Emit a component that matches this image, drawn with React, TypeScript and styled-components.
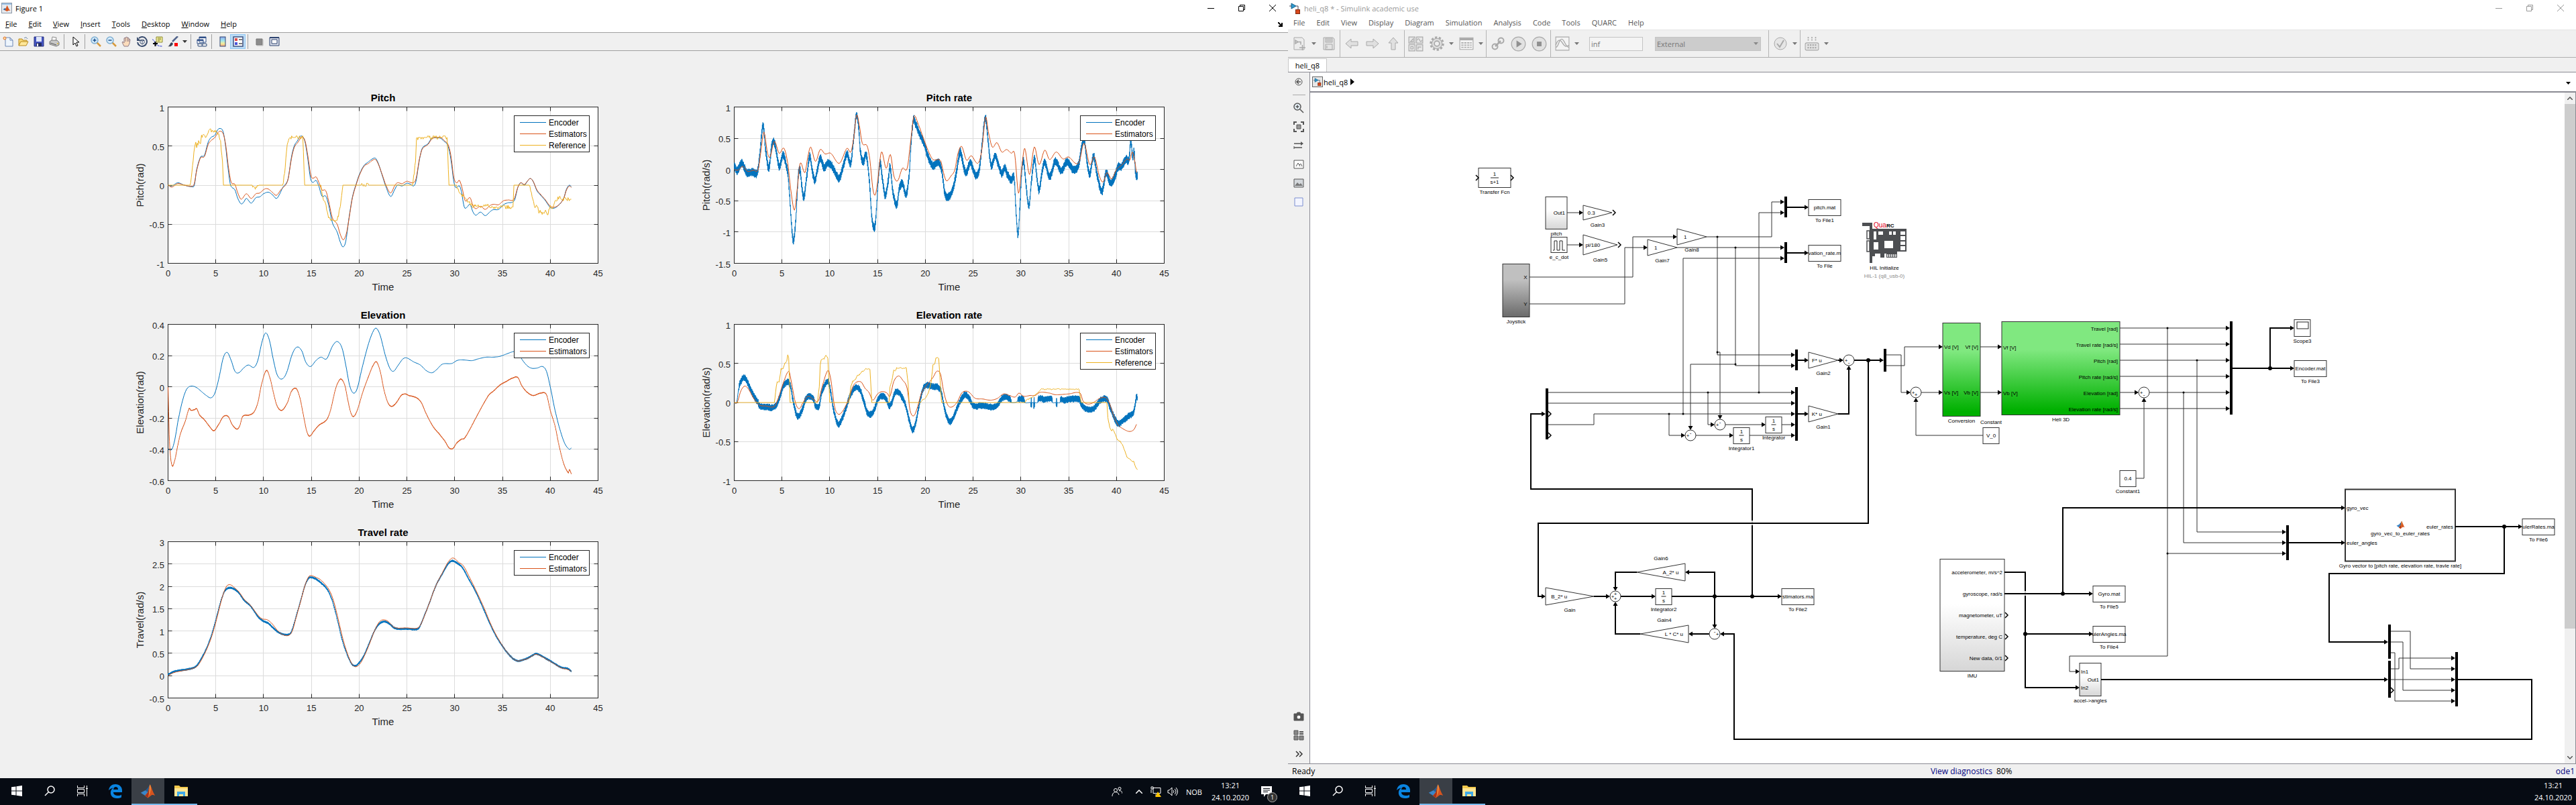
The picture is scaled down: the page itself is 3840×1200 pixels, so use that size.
import React from 'react';
import styled, { createGlobalStyle, css } from 'styled-components';

/* ------------------------------------------------------------------ */
/* Shared tokens                                                       */
/* ------------------------------------------------------------------ */

const UI_FONT = '"Open Sans", "Noto Sans", sans-serif';
const PLOT_FONT = '"Liberation Sans", Arial, sans-serif';
const BLUE = '#0072bd';
const ORANGE = '#d95319';
const YELLOW = '#edb120';

const GlobalStyle = createGlobalStyle`
  * { box-sizing: border-box; }
  body { margin: 0; background: #f0f0f0; font-family: ${UI_FONT}; font-size: 11px; color: #000; }
  button, input, select { font: inherit; color: inherit; }
`;

const Desktop = styled.div`
  display: grid;
  grid-template-columns: 1fr 1fr;
  min-height: 100vh;
`;

const Screen = styled.div`
  display: flex;
  flex-direction: column;
  min-width: 0;
`;

/* ------------------------------------------------------------------ */
/* Window chrome                                                       */
/* ------------------------------------------------------------------ */

const Window = styled.section`
  flex: 1;
  display: flex;
  flex-direction: column;
  min-height: 0;
  background: #f0f0f0;
`;

const TitleBar = styled.header<{ $dim?: boolean }>`
  display: flex;
  align-items: center;
  height: 24px;
  padding-left: 2px;
  background: #fff;
  color: ${(p) => (p.$dim ? '#999' : '#000')};
`;

const WindowTitle = styled.h1`
  flex: 1;
  margin: 0;
  padding-left: 5px;
  font-size: 11px;
  font-weight: 400;
`;

const CaptionButton = styled.button`
  width: 46px;
  height: 24px;
  padding: 0;
  border: 0;
  background: none;
  display: grid;
  place-items: center;
`;

const MenuBar = styled.nav<{ $compact?: boolean }>`
  display: flex;
  align-items: center;
  gap: 17px;
  height: ${(p) => (p.$compact ? 20 : 24)}px;
  padding: 0 8px;
  background: #fff;
  color: ${(p) => (p.$compact ? '#555' : '#000')};
`;

const MenuItem = styled.button`
  padding: 0;
  border: 0;
  background: none;
  line-height: 16px;
`;

const MenuEnd = styled.span`
  margin-left: auto;
  display: flex;
`;

const Caption = () => (
  <>
    <CaptionButton aria-label="Minimize">
      <svg width="10" height="10"><path d="M0 5.5h10" stroke="currentColor" /></svg>
    </CaptionButton>
    <CaptionButton aria-label="Restore">
      <svg width="10" height="10" fill="none" stroke="currentColor">
        <path d="M0.5 2.5h7v7h-7zM2.5 2.5v-2h7v7h-2" />
      </svg>
    </CaptionButton>
    <CaptionButton aria-label="Close">
      <svg width="10" height="10"><path d="M0 0l10 10M10 0L0 10" stroke="currentColor" /></svg>
    </CaptionButton>
  </>
);

/* ------------------------------------------------------------------ */
/* Logos                                                               */
/* ------------------------------------------------------------------ */

const Membrane = ({ size = 16 }: { size?: number }) => (
  <svg width={size} height={size} viewBox="0 0 16 16">
    <path d="M0.5 9.5L5.5 7 8 9 5 12.5z" fill="#3a86c8" />
    <path d="M5.500 7Q8.500 4.500 10 1L8 9z" fill="#245f96" />
    <path d="M10 1C11 1 12.500 8 15.500 12.500 13 11.500 12 11.500 10.500 13L8 15 5 12.500 8 9z" fill="#d6541f" />
    <path d="M10 1C11 1 11.500 6 10 10L8 15 5 12.500 8 9z" fill="#f0913f" />
    <path d="M10 1C9 5 10 9 8 15L5 12.500 8 9z" fill="#a8321a" />
  </svg>
);

const FigureIcon = () => (
  <svg width="16" height="16" viewBox="0 0 16 16">
    <rect x="0.500" y="0.500" width="15" height="15" fill="#e6e9ee" stroke="#8d99a8" />
    <path d="M1 2h14" stroke="#9cc3e8" strokeWidth="2" />
    <path d="M2.500 10l3-2 2 1.500-2 2z" fill="#2d6da8" />
    <path d="M5.500 11.500L8.500 4c1 1 2 5 5 8-2-.5-3-.5-5 1z" fill="#d6541f" />
  </svg>
);

const ModelIcon = () => (
  <svg width="17" height="17" viewBox="0 0 17 17">
    <path d="M3 1v8l7-4z" fill="#2f9bd0" stroke="#14608a" />
    <path d="M0 5h3M10 5h3v6" stroke="#445" fill="none" />
    <rect x="9.500" y="10.500" width="6" height="6" fill="#d9481c" stroke="#7e2a10" />
  </svg>
);

/* ------------------------------------------------------------------ */
/* Figure toolbar                                                      */
/* ------------------------------------------------------------------ */

const FigureTools = styled.div`
  display: flex;
  align-items: center;
  height: 28px;
  border-top: 1px solid #a0a0a0;
  border-bottom: 1px solid #a0a0a0;
`;

const FigureGroup = styled.div`
  display: flex;
  align-items: center;
  height: 22px;
  padding: 0 3px 0 4px;
  border-right: 1px solid #a0a0a0;
  &:first-child { padding-left: 0; }
  &:last-child { border-right: 0; }
`;

const FigureButton = styled.button<{ $on?: boolean; $narrow?: boolean }>`
  width: ${(p) => (p.$narrow ? 12 : 23)}px;
  height: 22px;
  padding: 0;
  border: 1px solid ${(p) => (p.$on ? '#90c8f6' : 'transparent')};
  background: ${(p) => (p.$on ? '#bcdcf4' : 'none')};
  display: grid;
  place-items: center;
`;

const Ic = ({ children, size = 16 }: { children: React.ReactNode; size?: number }) => (
  <svg width={size} height={size} viewBox="0 0 16 16" fill="none">{children}</svg>
);

const lens = (
  <>
    <path d="M9 9l6 6" stroke="#d79a3c" strokeWidth="2.500" />
    <circle cx="6" cy="6" r="5" fill="#d6ecfb" stroke="#7eaed2" strokeWidth="1.500" />
  </>
);

const figureIcons: Record<string, React.ReactNode> = {
  'New figure': <Ic><path d="M4 2h7l4 4v9H4z" fill="#edf5fd" stroke="#6c87b5" /><path d="M11 2v4h4" stroke="#6c87b5" /><circle cx="3" cy="3" r="2" fill="#ffe9a0" stroke="#e06a30" /></Ic>,
  'Open file': <Ic><path d="M1 14V4h5l1 2h6v2" fill="#f7d774" stroke="#b88a1e" /><path d="M1 14l3-6h11l-3 6z" fill="#ffe89a" stroke="#b88a1e" /><path d="M9 3c2-2 4-1 5 1" stroke="#57789c" /></Ic>,
  'Save figure': <Ic><path d="M1 1h14v14H1z" fill="#4454c0" stroke="#2a3480" /><path d="M4 1h8v7H4z" fill="#dfe6fa" /><path d="M4 10h8v5H4z" fill="#252d60" /><path d="M5 11h2v4H5z" fill="#fff" /></Ic>,
  'Print figure': <Ic><path d="M5 1l6 1-1 6H4z" fill="#fff" stroke="#888" /><path d="M1 8l3-2h8l3 3v4l-4 2-10-3z" fill="#c8c8c8" stroke="#777" /><path d="M2 10l9 3" stroke="#555" /><circle cx="13" cy="11" r="1" fill="#d8b93a" /></Ic>,
  'Edit plot': <Ic><path d="M5 1v12l3-3 2 5 2-1-2-5h4z" fill="#fff" stroke="#000" /></Ic>,
  'Zoom in': <Ic>{lens}<path d="M3.500 6h5M6 3.500v5" stroke="#1c4f8c" strokeWidth="1.500" /></Ic>,
  'Zoom out': <Ic>{lens}<path d="M3.500 6h5" stroke="#1c4f8c" strokeWidth="1.500" /></Ic>,
  Pan: <Ic><path d="M4 15L1 9l1-1 2 2V3l1-1 1 1 1-2 2 1 1 0 1 1 0 1 1 0 1 1-1 6-2 4z" fill="#fbdcbc" stroke="#8f7b86" /><path d="M6 3v5M9 2v6M11 4v4" stroke="#8f7b86" /></Ic>,
  'Rotate 3D': <Ic><path d="M3 3a7 7 0 1 1-2 6" stroke="#3c4f70" strokeWidth="2" /><path d="M0 1v6h6z" fill="#3c4f70" /><path d="M5 6l3-1 3 1v4l-3 2-3-2zM5 6l3 1 3-1M8 7v5" fill="#fff" stroke="#3c4f70" /></Ic>,
  'Data cursor': <Ic><path d="M6 1h9v8H6z" fill="#f3ee9c" stroke="#8b8a35" /><path d="M8 3h5M8 5h5M8 7h3" stroke="#8b8a35" /><path d="M0 5c2 0 3 2 4 5s5 5 11 5" stroke="#2030d0" strokeDasharray="3 1" /><path d="M1 11h7M4.500 8v7" stroke="#000" strokeWidth="2" /></Ic>,
  Brush: <Ic><path d="M15 0L7 8" stroke="#54658c" strokeWidth="2.500" /><path d="M0 15c3 0 3-5 6-6l2 2c-1 4-5 5-8 4z" fill="#3c4458" /><path d="M10 10h5v5h-5z" fill="#f00" /></Ic>,
  'Link plot': <Ic><path d="M4 1h10v8H4zM1 5h9v6H1z" fill="#fff" stroke="#2f4f88" /><path d="M4 2h10M1 6h9" stroke="#2f4f88" strokeWidth="2" /><rect x="2" y="11" width="7" height="4" rx="2" stroke="#667b9c" strokeWidth="1.500" /><rect x="8" y="11" width="7" height="4" rx="2" stroke="#667b9c" strokeWidth="1.500" /></Ic>,
  'Insert colorbar': <Ic><defs><linearGradient id="cb" x2="0" y2="1"><stop offset="0" stopColor="#8fa8ee" /><stop offset=".4" stopColor="#9fe6ee" /><stop offset=".7" stopColor="#f4ef9a" /><stop offset="1" stopColor="#f0a080" /></linearGradient></defs><rect x="4" y="1" width="8" height="14" fill="url(#cb)" stroke="#2f4570" /></Ic>,
  'Insert legend': <Ic><rect x="1" y="1" width="14" height="14" fill="#fff" stroke="#3c5080" strokeWidth="1.500" /><path d="M3 3h4v4H3z" fill="#e04a4a" /><path d="M3 9h4v4H3z" fill="#4a55d8" /><path d="M9 5h5M9 11h5" stroke="#000" /></Ic>,
  'Hide plot tools': <Ic><path d="M4 4h9v9H4z" fill="#8c8c8c" stroke="#777" /><path d="M5 14h9V5" stroke="#b8b8b8" /></Ic>,
  'Show plot tools': <Ic><path d="M1 2h14v12H1z" fill="#d8dce8" stroke="#2f4570" /><path d="M1 2h14" stroke="#2f4570" strokeWidth="2" /><path d="M4 5h8v6H4z" fill="#fff" stroke="#2f4570" /></Ic>,
};

const figureGroups: string[][] = [
  ['New figure', 'Open file', 'Save figure', 'Print figure'],
  ['Edit plot'],
  ['Zoom in', 'Zoom out', 'Pan', 'Rotate 3D', 'Data cursor', 'Brush', 'Brush colors'],
  ['Link plot'],
  ['Insert colorbar', 'Insert legend'],
  ['Hide plot tools', 'Show plot tools'],
];

const Caret = ({ color = '#333' }: { color?: string }) => (
  <svg width="7" height="5"><path d="M0 0h7L3.500 4z" fill={color} /></svg>
);

/* ------------------------------------------------------------------ */
/* Plots                                                               */
/* ------------------------------------------------------------------ */

type Pt = number[];
const parse = (s: string): Pt[] => s.trim().split(/\s+/).map((p) => p.split(',').map(Number));

const rng = (seed: number) => () => {
  seed = (seed * 1664525 + 1013904223) % 4294967296;
  return seed / 4294967296;
};

/* Cubic resampling, so that sparse samples give a smooth curve. */
const smooth = (pts: Pt[], step: number): Pt[] => {
  const out: Pt[] = [];
  for (let i = 0; i < pts.length - 1; i += 1) {
    const a = pts[Math.max(i - 1, 0)];
    const b = pts[i];
    const c = pts[i + 1];
    const d = pts[Math.min(i + 2, pts.length - 1)];
    const span = c[0] - b[0];
    const mb = (c[1] - a[1]) / (c[0] - a[0]);
    const mc = (d[1] - b[1]) / (d[0] - b[0]);
    const n = Math.max(1, Math.round(span / step));
    for (let k = 0; k < n; k += 1) {
      const u = k / n;
      const u2 = u * u;
      const u3 = u2 * u;
      const y = (2 * u3 - 3 * u2 + 1) * b[1] + (u3 - 2 * u2 + u) * span * mb
        + (3 * u2 - 2 * u3) * c[1] + (u3 - u2) * span * mc;
      out.push([b[0] + u * span, y, b[2] ?? -1]);
    }
  }
  out.push(pts[pts.length - 1]);
  return out;
};

const noisy = (pts: Pt[], amp: number): Pt[] => {
  const r = rng(7);
  return smooth(pts, 0.03).map((p, i) => {
    const a = p[2] === undefined || p[2] < 0 ? amp : p[2];
    return [p[0], p[1] + (i % 2 ? 1 : -1) * a * (0.6 + 0.4 * r())];
  });
};

const jitter = (pts: Pt[], amp: number): Pt[] => {
  const r = rng(3);
  const out: Pt[] = [];
  for (let i = 0; i < pts.length - 1; i += 1) {
    const [b, c] = [pts[i], pts[i + 1]];
    const n = Math.max(1, Math.round((c[0] - b[0]) / 0.07));
    for (let k = 0; k < n; k += 1) {
      const y = b[1] + ((c[1] - b[1]) * k) / n;
      out.push([b[0] + ((c[0] - b[0]) * k) / n, y === 0 ? 0 : y + (Math.round(r() * 2) - 1) * amp]);
    }
  }
  out.push(pts[pts.length - 1]);
  return out;
};

interface Series { name: string; color: string; points: Pt[] }
interface PlotSpec { title: string; ylabel: string; min: number; max: number; step: number; series: Series[] }

const pitchEnc = parse(`0,0 .4,-.01 1,.03 1.7,0 2.5,-.02 2.75,0 3,.2 3.4,.36 3.8,.38 4.2,.55 4.5,.61 4.9,.64 5.2,.71 5.45,.725 5.75,.69 6,.52 6.25,.25 6.5,.02 6.7,-.03 7,-.06 7.3,-.17 7.65,-.24 7.9,-.22 8.2,-.17 8.7,-.23 9.2,-.16 9.6,-.15 10,-.11 10.5,-.09 10.9,-.12 11.35,-.17 11.7,-.11 12,-.03 12.4,.03 12.6,.1 12.9,.35 13.2,.5 13.5,.56 13.9,.63 14.3,.57 14.6,.36 14.9,.09 15.15,.035 15.5,.06 15.8,-.02 16.1,-.14 16.5,-.14 16.8,-.25 17.2,-.48 17.7,-.6 18,-.72 18.3,-.79 18.6,-.72 18.9,-.45 19.3,-.15 19.7,.02 20,.13 20.5,.25 21,.3 21.3,.33 21.7,.345 22,.28 22.4,.13 22.8,-.02 23.3,-.145 23.7,-.06 24,0 24.5,-.01 25,.025 25.4,.01 25.7,-.01 25.95,.05 26.3,.32 26.6,.47 27.2,.53 27.6,.6 28,.605 28.5,.6 28.9,.56 29.3,.5 29.6,.33 29.9,.05 30.1,-.03 30.5,-.01 30.7,-.08 31,-.28 31.3,-.28 31.6,-.245 31.9,-.34 32.2,-.385 32.7,-.345 33.2,-.39 33.7,-.34 34,-.315 34.6,-.31 35.1,-.25 35.6,-.225 36,-.22 36.3,-.18 36.6,-.03 36.9,.03 37.3,0 37.6,.05 37.9,.085 38.2,.05 38.6,-.07 39,-.13 39.5,-.2 40,-.285 40.5,-.29 41,-.24 41.4,-.17 41.7,-.05 42,0 42.2,-.02`);
const pitchEst = parse(`0,0 .4,-.025 1,.02 1.7,0 2.5,-.015 2.75,.02 3,.19 3.4,.35 3.8,.365 4.2,.52 4.5,.57 4.9,.61 5.2,.67 5.5,.69 5.8,.65 6.05,.5 6.3,.25 6.6,.04 7,.01 7.3,-.1 7.65,-.18 8.2,-.11 8.7,-.17 9.2,-.11 9.6,-.1 10.1,-.05 10.5,-.05 10.9,-.09 11.35,-.13 11.8,-.06 12.4,.02 12.6,.1 12.9,.33 13.2,.48 13.6,.55 14,.62 14.35,.56 14.65,.36 14.95,.12 15.2,.09 15.5,.105 15.8,.03 16.1,-.06 16.5,-.07 16.8,-.2 17.2,-.42 17.7,-.5 18,-.62 18.35,-.7 18.7,-.6 19,-.38 19.3,-.16 19.7,.01 20,.12 20.5,.24 21,.28 21.3,.31 21.7,.33 22,.27 22.4,.14 22.8,0 23.3,-.1 23.7,-.01 24,.03 24.5,.02 25,.05 25.6,.03 25.95,.08 26.3,.33 26.6,.46 27.2,.52 27.6,.59 28,.61 28.6,.605 28.9,.57 29.3,.52 29.6,.38 29.9,.1 30.2,.03 30.5,.06 30.8,-.05 31.1,-.2 31.6,-.16 31.9,-.26 32.2,-.3 32.7,-.27 33.2,-.31 33.7,-.26 34.1,-.245 34.6,-.25 35.1,-.2 35.6,-.19 36.2,-.18 36.6,-.03 36.9,.03 37.3,.01 37.6,.05 37.9,.085 38.2,.05 38.6,-.06 39,-.12 39.5,-.19 40,-.27 40.5,-.28 41,-.24 41.4,-.17 41.7,-.06 42,-.01 42.2,-.03`);
const pitchRef = parse(`0,0 2.3,0 2.5,.15 2.7,.4 2.8,.5 2.9,.55 3,.5 3.2,.55 3.4,.53 3.5,.62 3.7,.65 4,.62 4.2,.67 4.4,.7 5,.7 5.3,.64 5.5,.55 5.7,.3 5.8,0 8.8,0 9.2,-.04 9.5,0 12,0 12.2,.15 12.4,.45 12.6,.59 12.8,.61 14.1,.61 14.3,0 16,0 16.2,-.15 16.6,-.3 16.8,-.42 17,-.45 17.7,-.45 17.9,-.35 18.1,-.2 18.3,0 20.2,0 20.5,.01 21,0 25.6,0 25.7,.1 25.9,.3 26,.58 26.2,.61 29.2,.61 29.4,0 30.1,0 30.5,-.1 31,-.15 31.5,-.22 31.9,-.27 33,-.27 33.6,-.26 34,-.28 36.1,-.28 36.2,0 37.8,0 38.1,-.15 38.4,-.27 38.7,-.28 38.8,-.36 39,-.33 39.3,-.38 39.5,-.32 39.7,-.38 40,-.28 40.3,-.28 40.5,-.2 40.8,-.17 41,-.14 41.3,-.18 42.2,-.18`);
const prEnc = parse(`0,.05 .3,-.02 .8,.1 1.3,-.05 1.9,-.04 2.4,-.05 2.65,.2 3,.7 3.3,.3 3.6,.02 3.9,.35 4.1,.45 4.4,.3 4.7,.05 5.1,.23 5.4,.1 5.7,-.2 6,-.9 6.2,-1.14 6.45,-.8 6.7,-.1 6.9,-.02 7.1,-.3 7.3,-.44 7.6,-.1 7.9,.21 8.2,-.05 8.45,-.17 8.7,0 9,.18 9.4,.03 9.8,.1 10.2,.06 10.6,-.06 11,-.14 11.4,.05 11.8,.25 12.2,.1 12.5,.5 12.8,.87 13,.7 13.2,.3 13.5,.12 13.8,.24 14.1,-.1 14.4,-.75 14.7,-.93 14.9,-.6 15.1,-.1 15.3,.1 15.5,-.15 15.8,-.41 16.1,-.2 16.3,.04 16.6,-.35 17,-.56 17.3,-.3 17.6,-.22 18,-.4 18.3,-.1 18.5,.4 18.75,.8 19,.72 19.4,.57 19.9,.4 20.3,.2 20.8,.06 21.3,.12 21.7,0 22,-.35 22.3,-.44 22.8,-.35 23.2,-.1 23.5,.2 23.7,.28 24,.05 24.3,-.05 24.7,.12 25,0 25.4,-.1 25.7,.05 26,.5 26.3,.82 26.6,.4 26.9,.06 27.3,.22 27.6,.1 28,-.06 28.3,.02 28.6,-.08 29,-.17 29.3,-.15 29.5,-.7 29.7,-1.03 29.9,-.6 30.1,0 30.3,.12 30.6,-.35 30.85,-.58 31.1,-.2 31.4,.17 31.7,-.15 31.9,-.34 32.2,-.05 32.5,.12 33,-.12 33.6,.13 34.2,-.02 34.8,.12 35.5,0 36,.06 36.3,.3 36.6,.48 36.9,.15 37.2,-.08 37.6,.21 38,-.1 38.5,-.35 38.9,-.06 39.4,-.22 39.9,-.08 40.2,.05 40.5,.04 41,.17 41.3,.15 41.5,.45 41.7,.2 41.85,.28 42,-.06 42.2,-.1`);
const prEst = parse(`0,0 .4,-.01 .9,.05 1.4,-.03 2,-.01 2.5,0 2.8,.3 3.1,.6 3.5,.25 3.75,.2 4.2,.45 4.7,.26 5.2,.34 5.6,.1 5.9,-.3 6.3,-.65 6.6,-.3 6.9,.1 7.4,-.05 7.7,.2 8,.36 8.5,.13 9,.32 9.5,.25 10.1,.26 11,.1 11.8,.34 12.2,.28 12.5,.5 12.8,.87 13.1,.7 13.4,.42 13.9,.38 14.2,.15 14.5,-.3 14.75,-.41 15,-.2 15.4,.28 15.9,.02 16.35,.24 16.7,-.1 17.1,-.18 17.6,.02 18.1,.02 18.5,.5 18.8,.85 19.2,.75 19.8,.5 20.3,.3 20.8,.16 21.6,.14 21.9,-.05 22.2,-.18 22.7,-.1 23.1,0 23.4,.25 23.8,.37 24.3,.15 24.8,.22 25.5,.1 25.9,.3 26.3,.84 26.6,.6 27,.36 27.5,.43 28,.28 28.5,.32 29,.26 29.35,.25 29.75,-.38 30.1,.05 30.4,.34 30.9,-.08 31.4,.36 31.9,.08 32.5,.31 33,.16 33.7,.28 34.4,.17 35,.2 35.7,.1 36.1,.12 36.6,.42 37.2,.08 37.7,.2 38.2,-.1 38.6,-.2 39,-.05 39.5,-.15 40,0 40.6,.08 41.1,.17 41.4,.15 41.65,.28 41.9,.15 42.1,-.05`);
const elEnc = parse(`0,-.4 .4,-.4 .7,-.34 1.1,-.2 1.6,-.07 2,-.01 2.5,.005 3,-.005 3.5,-.03 4,-.055 4.5,-.07 4.9,-.04 5.3,.05 5.8,.19 6.2,.22 6.6,.17 7,.1 7.4,.09 7.9,.12 8.4,.14 9,.125 9.4,.17 9.8,.28 10.2,.345 10.6,.3 11,.18 11.4,.08 11.9,.05 12.4,.09 13,.21 13.5,.255 14,.23 14.4,.16 14.9,.13 15.5,.17 16,.19 16.6,.18 17.2,.26 17.7,.29 18.2,.25 18.6,.14 19,.01 19.4,-.04 19.8,-.01 20.3,.12 21,.28 21.5,.36 21.8,.375 22.2,.33 22.7,.21 23.2,.12 23.6,.1 24.1,.14 24.6,.18 25,.185 25.7,.16 26.4,.14 27,.105 27.6,.09 28.1,.11 28.7,.145 29.7,.15 30.3,.17 31,.172 31.8,.168 32.5,.18 33.3,.19 34,.19 34.7,.195 35.4,.21 36.1,.225 36.6,.225 37,.18 37.5,.14 38,.12 38.6,.12 39.2,.13 39.6,.1 40,0 40.5,-.15 41,-.27 41.5,-.36 42,-.4 42.2,-.39`);
const elEst = parse(`0,0 .15,-.35 .4,-.5 .7,-.47 1,-.38 1.3,-.3 1.8,-.22 2.2,-.14 2.4,-.15 2.8,-.145 3,-.14 3.3,-.18 3.8,-.21 4.3,-.25 4.8,-.28 5.3,-.24 5.8,-.19 6.3,-.19 6.7,-.24 7.2,-.27 7.5,-.25 7.8,-.19 8.5,-.18 9,-.16 9.4,-.1 9.8,.02 10.3,.105 10.7,.05 11,-.03 11.4,-.12 11.9,-.15 12.5,-.1 12.9,-.03 13.4,-.01 13.8,-.07 14.1,-.16 14.5,-.28 14.8,-.315 15.3,-.28 15.8,-.245 16.6,-.21 17,-.15 17.5,-.02 17.8,.03 18.1,.05 18.5,.01 18.8,-.08 19.1,-.16 19.4,-.19 19.8,-.15 20.4,-.03 21,.07 21.4,.13 21.8,.16 22.2,.1 22.6,-.02 23,-.1 23.4,-.125 23.9,-.1 24.4,-.055 24.8,-.045 25.2,-.055 26,-.07 26.5,-.1 27,-.17 27.7,-.25 28.5,-.31 29,-.35 29.4,-.39 29.8,-.395 30.2,-.36 30.7,-.335 31,-.33 31.6,-.27 32.2,-.2 33,-.11 33.6,-.05 34,-.03 34.7,.01 35.4,.035 36,.055 36.6,.06 37,.01 37.5,-.03 38.2,-.055 39,-.04 39.6,-.05 40,-.15 40.5,-.25 40.9,-.37 41.4,-.49 41.9,-.55 42,-.53 42.2,-.555`);
/* A third number is the sample's own noise amplitude. */
const erEnc = parse(`0,0,0 .25,0,0 .5,.2 .8,.29 1,.32 1.3,.28 1.7,.17 2.2,.05 2.5,0 2.6,-.04 3.5,-.06 4.3,-.05 4.7,.05 5.1,.2 5.6,.26 5.9,.2 6.2,0 6.5,-.15 6.7,-.18 7.1,-.1 7.4,.02 7.8,.08 8.3,.04 8.5,-.04 8.9,-.04 9.1,.1 9.5,.23 9.9,.25 10.2,.05 10.5,-.15 10.9,-.28 11.3,-.2 11.7,-.07 12.1,.08 12.7,.19 13.2,.15 13.6,0 13.9,-.12 14.3,-.15 14.7,-.08 15,.03 15.4,.08 15.9,.05 16.2,-.04 16.5,0 16.8,.12 17.1,.14 17.5,.08 17.9,-.02 18.3,-.22 18.7,-.35 19.1,-.2 19.4,0 19.8,.18 20.2,.22 20.9,.2 21.3,.2 21.7,.12 22,-.08 22.5,-.24 22.9,-.2 23.4,-.05 23.8,.05 24.2,.1 24.7,.03 25,-.04 26,-.04 27,-.06 27.5,-.04 28,.05 28.3,.07 28.9,.04 29,0,0 29.6,.01,0 29.7,.04 30.3,.04 30.4,0,0 31,0,0 31.05,0,.08 31.15,0,0 31.35,0,.08 31.45,0,0 31.75,0,0 31.8,.04 32.1,.05 32.4,.04 32.9,.05 33.25,.04 33.3,0,0 33.65,0,0 33.7,0,.07 33.8,0,0 34.1,0,0 34.15,.04 34.5,.03 35,.04 36.1,.04 36.4,-.04 37,-.09 37.6,-.08 38,-.02 38.3,.03 39,.04 39.3,-.05 39.8,-.2 40.2,-.27 40.6,-.24 41.2,-.18 41.8,-.12 42,0 42.1,.08 42.2,.05`);
const erEst = parse(`0,0 .3,0 .7,.15 1.1,.21 1.5,.17 2,.06 2.6,-.03 3.3,-.045 4.2,-.05 4.6,.05 5,.2 5.7,.4 6,.25 6.4,0 6.8,-.08 7.2,0 7.7,.08 8.3,.04 8.8,.02 9.2,.2 9.8,.41 10.1,.3 10.5,-.05 10.9,-.15 11.4,-.1 12,.05 12.4,.2 12.8,.26 13.3,.26 13.7,.18 14.1,.13 14.5,.03 15,.11 15.5,.14 16,.12 16.3,.08 16.7,.27 17.2,.34 17.6,.29 18.1,.18 18.4,-.1 18.8,-.17 19.2,-.05 19.6,.12 20.2,.23 20.8,.32 21.2,.4 21.6,.36 21.9,.15 22.3,-.02 22.7,-.06 23.3,0 23.8,.12 24.2,.145 24.6,.13 25.2,.055 26,.045 26.8,.03 27.5,.05 28.2,.11 28.8,.09 29.4,.07 29.8,.12 30.3,.08 31,.09 31.5,.09 32,.13 33,.12 33.6,.1 35,.11 36.2,.12 36.5,.02 37,-.02 37.6,0 38.2,.05 38.9,.06 39.3,-.02 39.7,-.17 40.2,-.29 40.6,-.33 41.3,-.37 41.8,-.35 42.1,-.28`);
const erRef = parse(`0,0 4.2,0 4.4,.2 4.5,.26 4.7,.26 4.9,.43 5.1,.43 5.3,.5 5.5,.53 5.6,.61 5.7,.57 5.85,0 8.7,0 8.9,.2 9,.48 9.1,.54 9.4,.56 9.6,.61 9.8,.57 10,0 12,0 12.2,.2 12.4,.27 12.7,.3 12.9,.35 13.1,.35 13.3,.39 13.6,.41 13.7,.43 14.2,.43 14.4,0 16.2,0 16.3,.2 16.5,.28 16.7,.41 16.9,.41 17,.44 18,.44 18.2,.25 18.3,0 19.5,0 19.7,.03 20,.05 20.3,.12 20.6,.25 20.8,.48 21,.5 21.1,.57 21.4,.57 21.7,0 30.4,0 30.6,.03 31.1,.06 31.5,.1 31.9,.14 32.1,.17 36.1,.17 36.3,0 39,0 39.1,-.2 39.3,-.32 39.5,-.37 39.6,-.34 39.8,-.38 40.1,-.48 40.4,-.5 40.7,-.56 40.9,-.62 41.1,-.7 41.4,-.72 41.6,-.75 41.8,-.75 42,-.83 42.2,-.86`);
const trEnc = parse(`0,.02 .5,.08 1,.11 2,.14 2.8,.19 3.2,.28 4,.6 4.5,.88 5,1.25 5.5,1.65 5.9,1.88 6.3,1.96 6.8,1.95 7.3,1.88 8,1.68 8.6,1.57 9.5,1.3 10,1.22 10.5,1.17 11,1.07 11.5,.98 12,.93 12.6,.92 12.9,.98 13.3,1.25 13.9,1.7 14.3,2 14.7,2.18 15,2.2 15.5,2.16 16,2.08 16.7,1.92 17.2,1.67 17.7,1.27 18.2,.82 18.7,.5 19.2,.27 19.6,.22 20,.29 20.5,.45 21,.7 21.6,1 22.1,1.16 22.6,1.21 23.1,1.17 23.8,1.06 25,1.05 26,1.04 26.3,1.08 26.7,1.28 27.3,1.6 28,2 28.8,2.32 29.3,2.5 29.7,2.57 30.1,2.54 30.8,2.42 31.5,2.15 32.2,1.88 33,1.5 34,1.02 35,.66 36,.4 36.6,.33 37.1,.35 37.6,.39 38.1,.45 38.5,.49 39,.45 39.5,.39 40,.33 40.6,.25 41.2,.18 41.8,.16 42.2,.1`);
const trEst = parse(`0,0 .5,.06 1,.09 2,.13 2.8,.18 3.2,.25 4,.57 4.6,.9 5.1,1.28 5.6,1.7 5.9,1.9 6.2,2.02 6.6,2.03 7,1.96 7.4,1.88 8,1.7 8.6,1.58 9.5,1.33 9.9,1.27 10.4,1.25 10.9,1.16 11.5,1 12,.92 12.6,.9 13,1 13.4,1.3 13.9,1.68 14.3,2 14.7,2.21 15,2.24 15.5,2.2 16,2.14 16.8,1.94 17.3,1.69 17.8,1.27 18.3,.82 18.8,.48 19.2,.28 19.6,.2 20.1,.27 20.6,.47 21,.67 21.6,1 22.1,1.2 22.5,1.25 23,1.22 23.7,1.08 25,1.07 26,1.06 26.4,1.13 26.8,1.32 27.3,1.6 28,2 28.8,2.34 29.3,2.54 29.7,2.63 30,2.62 30.4,2.54 30.9,2.46 31.6,2.18 32.2,1.92 33,1.55 34,1.05 35,.67 36,.4 36.6,.33 37.1,.35 37.6,.38 38.1,.44 38.5,.48 39,.44 39.5,.38 40,.32 40.6,.24 41.2,.17 41.8,.14 42.2,.1`);

const plots: PlotSpec[] = [
  {
    title: 'Pitch', ylabel: 'Pitch(rad)', min: -1, max: 1, step: 0.5,
    series: [
      { name: 'Encoder', color: BLUE, points: smooth(pitchEnc, 0.08) },
      { name: 'Estimators', color: ORANGE, points: smooth(pitchEst, 0.08) },
      { name: 'Reference', color: YELLOW, points: jitter(pitchRef, 0.02) },
    ],
  },
  {
    title: 'Pitch rate', ylabel: 'Pitch(rad/s)', min: -1.5, max: 1, step: 0.5,
    series: [
      { name: 'Encoder', color: BLUE, points: noisy(prEnc, 0.07) },
      { name: 'Estimators', color: ORANGE, points: smooth(prEst, 0.08) },
    ],
  },
  {
    title: 'Elevation', ylabel: 'Elevation(rad)', min: -0.6, max: 0.4, step: 0.2,
    series: [
      { name: 'Encoder', color: BLUE, points: smooth(elEnc, 0.08) },
      { name: 'Estimators', color: ORANGE, points: noisy(elEst, 0.003) },
    ],
  },
  {
    title: 'Elevation rate', ylabel: 'Elevation(rad/s)', min: -1, max: 1, step: 0.5,
    series: [
      { name: 'Encoder', color: BLUE, points: noisy(erEnc, 0.045) },
      { name: 'Estimators', color: ORANGE, points: smooth(erEst, 0.08) },
      { name: 'Reference', color: YELLOW, points: jitter(erRef, 0.006) },
    ],
  },
  {
    title: 'Travel rate', ylabel: 'Travel(rad/s)', min: -0.5, max: 3, step: 0.5,
    series: [
      { name: 'Encoder', color: BLUE, points: noisy(trEnc, 0.025) },
      { name: 'Estimators', color: ORANGE, points: smooth(trEst, 0.08) },
    ],
  },
];

const FigureArea = styled.main`
  flex: 1;
  display: grid;
  grid-template-columns: 1fr 1fr;
  column-gap: 104px;
  align-content: start;
  padding: 45px 156px 0 180px;
`;

const PlotSvg = styled.svg`
  display: block;
  width: 100%;
  font-family: ${PLOT_FONT};
  font-size: 13px;
  fill: #262626;
  .title { font-size: 15px; font-weight: 700; fill: #000; text-anchor: middle; }
  .axis { font-size: 15px; text-anchor: middle; }
  .tick { text-anchor: middle; }
  .value { text-anchor: end; }
  .legend { font-size: 12px; fill: #000; }
`;

const AX = { x: 70.5, y: 38.5, w: 641, h: 233 };

const Plot = ({ spec }: { spec: PlotSpec }) => {
  const sx = (t: number) => AX.x + (t / 45) * AX.w;
  const sy = (v: number) => AX.y + ((spec.max - v) / (spec.max - spec.min)) * AX.h;
  const xs = Array.from({ length: 10 }, (_, i) => i * 5);
  const ys: number[] = [];
  for (let v = spec.min; v <= spec.max + 0.001; v += spec.step) ys.push(Math.round(v * 10) / 10);
  const right = AX.x + AX.w;
  const bottom = AX.y + AX.h;
  const lh = spec.series.length === 3 ? 54 : 37;
  const snap = (n: number) => Math.floor(n) + 0.5;
  return (
    <PlotSvg viewBox="0 0 740 324" role="img" aria-label={spec.title}>
      <rect x={AX.x} y={AX.y} width={AX.w} height={AX.h} fill="#fff" />
      {xs.slice(1, -1).map((t) => (
        <path key={t} d={`M${snap(sx(t))} ${AX.y}V${bottom}`} stroke="#dcdcdc" />
      ))}
      {ys.slice(1, -1).map((v) => (
        <path key={v} d={`M${AX.x} ${snap(sy(v))}H${right}`} stroke="#dcdcdc" />
      ))}
      {xs.map((t) => (
        <path key={t} d={`M${snap(sx(t))} ${AX.y}v6m0 ${AX.h - 12}v6`} stroke="#262626" />
      ))}
      {ys.map((v) => (
        <path key={v} d={`M${AX.x} ${snap(sy(v))}h6m${AX.w - 12} 0h6`} stroke="#262626" />
      ))}
      <rect x={AX.x} y={AX.y} width={AX.w} height={AX.h} fill="none" stroke="#262626" />
      {spec.series.map((s) => (
        <polyline
          key={s.name}
          points={s.points.map((p) => `${sx(p[0]).toFixed(1)},${sy(p[1]).toFixed(1)}`).join(' ')}
          fill="none"
          stroke={s.color}
          strokeLinejoin="round"
        />
      ))}
      <text className="title" x={AX.x + AX.w / 2} y="30">{spec.title}</text>
      {xs.map((t) => <text key={t} className="tick" x={sx(t)} y="291">{t}</text>)}
      {ys.map((v) => <text key={v} className="value" x="65" y={sy(v) + 6}>{v}</text>)}
      <text className="axis" x={AX.x + AX.w / 2} y="312">Time</text>
      <text className="axis" transform={`translate(34 ${AX.y + AX.h / 2}) rotate(-90)`}>{spec.ylabel}</text>
      <rect x="586.5" y="51.5" width="112" height={lh} fill="#fff" stroke="#262626" />
      {spec.series.map((s, i) => (
        <g key={s.name}>
          <path d={`M595 ${61.5 + i * 17}h39`} stroke={s.color} />
          <text className="legend" x="638" y={66 + i * 17}>{s.name}</text>
        </g>
      ))}
    </PlotSvg>
  );
};

const FigureWindow = () => (
  <Window>
    <TitleBar>
      <FigureIcon />
      <WindowTitle>Figure 1</WindowTitle>
      <Caption />
    </TitleBar>
    <MenuBar>
      {['File', 'Edit', 'View', 'Insert', 'Tools', 'Desktop', 'Window', 'Help'].map((m) => (
        <MenuItem key={m}><u>{m[0]}</u>{m.slice(1)}</MenuItem>
      ))}
      <MenuEnd>
        <svg width="7" height="7"><path d="M0 0l5 5M6 1v5H1" stroke="#000" fill="none" strokeWidth="2" /></svg>
      </MenuEnd>
    </MenuBar>
    <FigureTools>
      {figureGroups.map((g) => (
        <FigureGroup key={g[0]}>
          {g.map((name) => (
            <FigureButton key={name} aria-label={name} $on={name === 'Insert legend'} $narrow={!figureIcons[name]}>
              {figureIcons[name] ?? <Caret />}
            </FigureButton>
          ))}
        </FigureGroup>
      ))}
    </FigureTools>
    <FigureArea>
      {plots.map((p) => <Plot key={p.title} spec={p} />)}
    </FigureArea>
  </Window>
);

/* ------------------------------------------------------------------ */
/* Simulink toolbar                                                    */
/* ------------------------------------------------------------------ */

const ModelTools = styled.div`
  display: flex;
  height: 42px;
  border-top: 1px solid #e4e4e4;
  border-bottom: 1px solid #b0b0b0;
`;

const ModelGroup = styled.div`
  display: flex;
  align-items: center;
  padding: 0 1px;
  border-right: 1px solid #b4b4b4;
  &:last-child { border-right: 0; }
`;

const ModelButton = styled.button<{ $narrow?: boolean }>`
  width: ${(p) => (p.$narrow ? 13 : 31)}px;
  height: 31px;
  padding: 0;
  border: 0;
  background: none;
  display: grid;
  place-items: center;
`;

const field = css`
  height: 21px;
  border: 1px solid #c4c4c4;
  color: #777;
  padding: 0 2px;
  border-radius: 0;
`;

const StopTime = styled.input`
  ${field}
  width: 80px;
  margin-left: 12px;
  background: #f4f4f4;
`;

const SimMode = styled.select`
  ${field}
  width: 158px;
  margin: 0 10px 0 18px;
  background: #ccc;
  appearance: none;
`;

const SelectWrap = styled.label`
  position: relative;
  svg { position: absolute; right: 14px; top: 8px; }
`;

const G = ({ children, w = 20 }: { children: React.ReactNode; w?: number }) => (
  <svg width={w} height={w} viewBox="0 0 20 20" fill="none" stroke="#a9a9a9">{children}</svg>
);

const modelIcons: Record<string, React.ReactNode> = {
  'New model': <G><path d="M2 1h12l3 3v15H2z" fill="#ececec" /><path d="M4 5v5l4-2.500zM8 7.500h4v4M10 16h9M14.500 12v8" strokeWidth="1.500" /></G>,
  Save: <G><path d="M2 1h14l2 2v16H2z" fill="#e4e4e4" /><path d="M5 2h10v6H5zM5 11h10v8H5zM6 4h8M6 6h8M7 13v4" /></G>,
  Back: <G><path d="M1 10l8-7v4h10v6H9v4z" fill="#e0e0e0" /></G>,
  Forward: <G><path d="M19 10l-8-7v4H1v6h10v4z" fill="#e0e0e0" /></G>,
  Up: <G><path d="M10 1l7 8h-4v10H7V9H3z" fill="#e0e0e0" /></G>,
  'Library browser': <G w={23}><path d="M1 1h8v8H1zM11 1h8v8h-8zM1 11h8v8H1zM11 11h8v8h-8z" fill="#e8e8e8" /><path d="M3 7l4-4v4zM12 5q1.500-4 3 0t3 0M3.500 13.500h3v3h-3zM13 17v-3h4" /></G>,
  'Model configuration': <G w={22}><circle cx="10" cy="10" r="7" fill="#dedede" /><circle cx="10" cy="10" r="8.500" strokeDasharray="3 2.300" strokeWidth="2.500" /><circle cx="10" cy="10" r="3.500" fill="#f0f0f0" strokeWidth="1.500" /></G>,
  'Model explorer': <G w={22}><path d="M1 2h18v16H1z" fill="#f4f4f4" /><path d="M1 4h18" strokeWidth="3" /><path d="M3 9h14M3 12h14M3 15h14" strokeDasharray="3 1" strokeWidth="1.500" /></G>,
  Connect: <G><circle cx="5.500" cy="14.500" r="4" strokeWidth="2" /><circle cx="14.500" cy="5.500" r="4" strokeWidth="2" /><path d="M6 14l8-8" strokeWidth="2.500" /></G>,
  Run: <G w={23}><circle cx="10" cy="10" r="9" fill="#e2e2e2" /><path d="M7.500 5.500v9l7-4.500z" fill="#909090" stroke="none" /></G>,
  Stop: <G w={23}><circle cx="10" cy="10" r="9" fill="#e2e2e2" /><path d="M7 7h6v6H7z" fill="#909090" stroke="none" /></G>,
  'Data inspector': <G w={22}><path d="M1 1h18v18H1z" fill="#f4f4f4" /><path d="M1 15C5 15 5 4 9 4s5 11 10 11M1 12C4 4 7 4 10 9s5 6 9 3" strokeWidth="1.200" /></G>,
  'Model advisor': <G><circle cx="10" cy="10" r="9" fill="#e6e6e6" /><path d="M5 10l4 5 6-10" strokeWidth="2" /></G>,
  'Build model': <G w={22}><rect x="1" y="9" width="18" height="10" rx="2" fill="#e4e4e4" /><path d="M4 12h12M4 15.500h12" strokeDasharray="2 1.300" strokeWidth="2" /><path d="M5 1v6M10 1v6M15 1v6" strokeDasharray="2 1" strokeWidth="1.500" /></G>,
};

const Tool = ({ names }: { names: string[] }) => (
  <>
    {names.map((n) => (
      <ModelButton key={n} aria-label={n} $narrow={!modelIcons[n]}>
        {modelIcons[n] ?? <Caret color="#777" />}
      </ModelButton>
    ))}
  </>
);

const TabStrip = styled.div`
  display: flex;
  align-items: flex-end;
  height: 22px;
  border-bottom: 1px solid #8a8a92;
`;

const Tab = styled.button`
  width: 58px;
  height: 20px;
  padding: 0;
  border: 1px solid #c8c8c8;
  border-bottom: 0;
  background: #fff;
`;

const Workspace = styled.div`
  flex: 1;
  display: flex;
  min-height: 0;
`;

const Palette = styled.aside`
  width: 33px;
  display: flex;
  flex-direction: column;
  align-items: center;
  justify-content: space-between;
  border-right: 1px solid #8a8a92;
`;

const PaletteGroup = styled.div`
  display: flex;
  flex-direction: column;
  align-items: center;
`;

const PaletteButton = styled.button`
  width: 28px;
  height: 28px;
  padding: 0;
  border: 0;
  background: none;
  display: grid;
  place-items: center;
`;

const PaletteRule = styled.hr`
  width: 19px;
  margin: 5px 0;
  border: 0;
  border-top: 1px solid #aaa;
`;

const Editor = styled.div`
  flex: 1;
  display: flex;
  flex-direction: column;
  min-width: 0;
  background: #fff;
`;

const Breadcrumb = styled.div`
  display: flex;
  align-items: center;
  gap: 4px;
  height: 30px;
  padding: 0 8px 0 3px;
  border-bottom: 2px solid #8a8a92;
`;

const CrumbLink = styled.a`
  display: flex;
  align-items: center;
  gap: 1px;
  color: #000;
  text-decoration: none;
`;

const CrumbIcon = styled.span`
  display: grid;
  place-items: center;
  width: 16px;
  height: 16px;
  border: 1px solid #666;
  background: #e8e8e8;
  svg { width: 12px; height: 14px; }
`;

const CrumbMenu = styled.span`
  margin-left: auto;
`;

const CanvasRow = styled.div`
  flex: 1;
  display: flex;
  min-height: 0;
`;

const ScrollTrack = styled.div`
  width: 17px;
  display: flex;
  flex-direction: column;
  background: #f0f0f0;
  border-right: 1px solid #8a8a92;
`;

const ScrollArrow = styled.span`
  display: grid;
  place-items: center;
  height: 17px;
`;

const ScrollThumb = styled.div`
  flex: 81;
  background: #cdcdcd;
`;

const ScrollRest = styled.div`
  flex: 19;
`;

const StatusBar = styled.footer`
  display: grid;
  grid-template-columns: 1fr auto 1fr;
  grid-template-columns: 1fr 1fr auto;
  align-items: center;
  height: 22px;
  padding: 0 2px 0 6px;
  border-top: 1px solid #8a8a92;
  font-size: 12px;
`;

const StatusLink = styled.a`
  color: #00007f;
  text-decoration: none;
`;

const StatusCenter = styled.span`
  display: flex;
  gap: 6px;
  padding-left: 10px;
`;

const P = ({ children }: { children: React.ReactNode }) => (
  <svg width="16" height="16" viewBox="0 0 16 16" fill="none" stroke="#555">{children}</svg>
);

const paletteTop: [string, React.ReactNode][] = [
  ['Zoom', <P><circle cx="6" cy="6" r="5" fill="#eaf4fb" strokeWidth="1.500" /><path d="M10 10l5 5M3.500 6h5M6 3.500v5" strokeWidth="1.500" /></P>],
  ['Fit to view', <P><path d="M1 5V1h4M11 1h4v4M15 11v4h-4M5 15H1v-4" strokeWidth="2" /><path d="M5 5h6v6H5z" fill="#999" /></P>],
  ['Show signals', <P><path d="M1 5h12M1 11h12" strokeWidth="1.500" /><path d="M11 2l4 3-4 3z" fill="#555" stroke="none" /><path d="M1 9v4" /></P>],
  ['Annotation', <P><path d="M1 2h14v12H1z" fill="#fff" /><path d="M4 11l3-5 3 5M9 9l2-2 2 4" /></P>],
  ['Image', <P><path d="M1 2h14v12H1z" fill="#d4d8dc" /><path d="M2 12l4-5 3 3 2-2 3 4z" fill="#777" stroke="none" /></P>],
  ['Area', <P><path d="M2 2h12v12H2z" stroke="#7d8fd0" fill="#f3f5ff" /></P>],
];

const paletteBottom: [string, React.ReactNode][] = [
  ['Screenshot', <P><path d="M1 4h4l1-2h4l1 2h4v10H1z" fill="#555" /><circle cx="8" cy="9" r="3" fill="#fff" /></P>],
  ['Model data', <P><path d="M1 1h6v6H1zM1 9h6v6H1zM9 9h6v6H9z" fill="#888" /><path d="M9 3h6M9 6h6" strokeWidth="2" /></P>],
  ['Hide palette', <P><path d="M4 4l4 4-4 4M9 4l4 4-4 4" stroke="#333" strokeWidth="1.500" /></P>],
];

/* ------------------------------------------------------------------ */
/* Block diagram                                                       */
/* ------------------------------------------------------------------ */

const Diagram = styled.svg`
  flex: 1;
  min-width: 0;
  align-self: flex-start;
  font-family: ${PLOT_FONT};
  font-size: 8px;
  fill: #000;
  text { text-anchor: middle; }
  .left { text-anchor: start; }
  .right { text-anchor: end; }
`;

/* Draws a signal line; it ends in an arrow head. */
const Wire = ({ d, bold }: { d: string; bold?: boolean }) => {
  const pts = parse(d);
  const [a, b] = pts.slice(-2);
  const len = Math.hypot(b[0] - a[0], b[1] - a[1]);
  const [ux, uy] = [(b[0] - a[0]) / len, (b[1] - a[1]) / len];
  const base = [b[0] - ux * 6, b[1] - uy * 6];
  return (
    <>
      <polyline
        points={[...pts.slice(0, -1), base].map((p) => p.join()).join(' ')}
        fill="none"
        stroke={bold ? '#000' : '#333'}
        strokeWidth={bold ? 2 : 1}
      />
      <polygon
        fill="#000"
        points={`${b[0]},${b[1]} ${base[0] - uy * 3.5},${base[1] + ux * 3.5} ${base[0] + uy * 3.5},${base[1] - ux * 3.5}`}
      />
    </>
  );
};

/* A bold line that runs into a port without an arrow head. */
const Lead = ({ d }: { d: string }) => <polyline points={d} fill="none" stroke="#000" strokeWidth="2" />;

const Dot = ({ x, y, big }: { x: number; y: number; big?: boolean }) => <circle cx={x} cy={y} r={big ? 3 : 1.5} fill="#000" />;
const Bar = ({ x, y, h }: { x: number; y: number; h: number }) => <rect x={x} y={y} width="4" height={h} fill="#000" />;
const Bridge = ({ x, y }: { x: number; y: number }) => <rect x={x - 2} y={y - 4} width="4" height="7" fill="#fff" opacity="0.8" />;
const OpenPort = ({ x, y }: { x: number; y: number }) => <path d={`M${x} ${y - 4}l4 4l-4 4`} fill="none" stroke="#000" strokeWidth="1.5" />;

interface BoxProps {
  x: number; y: number; w: number; h?: number; text?: string; label?: string;
  fill?: string; above?: boolean; bold?: boolean; children?: React.ReactNode;
}
const Box = ({ x, y, w, h = 24, text, label, fill = '#fff', above, bold, children }: BoxProps) => (
  <g>
    <rect x={x} y={y + 0.5} width={w} height={h} fill={fill} stroke="#333" strokeWidth={bold ? 2 : 1} />
    {text && <text x={x + w / 2} y={y + h / 2 + 3}>{text}</text>}
    {children}
    {label && <text x={x + w / 2} y={above ? y - 5 : y + h + 10}>{label}</text>}
  </g>
);

const Fraction = ({ x, y, den, w = 7 }: { x: number; y: number; den: string; w?: number }) => (
  <>
    <text x={x} y={y - 3}>1</text>
    <path d={`M${x - w / 2} ${y}h${w}`} stroke="#222" />
    <text x={x} y={y + 9}>{den}</text>
  </>
);

interface GainProps {
  x: number; y: number; w: number; h: number; text: string; label: string; flip?: boolean; above?: boolean;
}
const Gain = ({ x, y, w, h, text, label, flip, above }: GainProps) => (
  <g>
    <path
      d={flip ? `M${x + w} ${y - h / 2}v${h}L${x} ${y}z` : `M${x} ${y - h / 2}v${h}L${x + w} ${y}z`}
      fill="#fff"
      stroke="#333"
    />
    <text x={flip ? x + w * 0.7 : x + w * 0.28} y={y + 3}>{text}</text>
    <text x={x + w / 2} y={above ? y - h / 2 - 5 : y + h / 2 + 10}>{label}</text>
  </g>
);

/* Each sign is placed on the side that its input arrives from. */
const Sum = ({ x, y, signs }: { x: number; y: number; signs: [string, 'l' | 'r' | 't' | 'b'][] }) => {
  const off = { l: [-4, 3], r: [4, 3], t: [0, -1], b: [0, 6] };
  return (
    <g>
      <circle cx={x} cy={y} r="8" fill="#fff" stroke="#333" />
      {signs.map(([s, side]) => (
        <text key={side} x={x + off[side][0]} y={y + off[side][1]}>{s}</text>
      ))}
    </g>
  );
};

const HilBoard = () => (
  <g>
    <path d="M2776 332h15v60h-4v-55h-11z" fill="#4d4f52" />
    <path d="M2783 344h4v12h-4zM2783 359h4v16h-4z" fill="#fff" stroke="#4d4f52" strokeWidth="1.500" />
    <path d="M2791 341h51v34h-14v9h-16v-6h-3v6h-6v-6h-8v4h-4z" fill="#4d4f52" />
    <path d="M2793 345h4v12h-4zM2793 361h7v11h-7zM2800 345h7v5h-7zM2816 345h4v5h-4zM2822 345h4v5h-4zM2833 345h7v5h-7zM2833 352h7v6h-7zM2833 360h7v5h-7zM2833 367h7v6h-7zM2809 359h13v11h-13z" fill="#fff" />
    <path d="M2814 379v4M2817 379v4M2820 379v4M2823 379v4M2826 379v4" stroke="#fff" strokeWidth="1.500" />
    <text className="left" x="2793" y="339" fontSize="10" fill="#e2001a">Qua</text>
    <text className="left" x="2812" y="339" fontWeight="700">RC</text>
  </g>
);

const ModelDiagram = () => (
  <Diagram viewBox="1953 138 1870 1000" role="img" aria-label="heli_q8 block diagram">
    <defs>
      <linearGradient id="gray" x2="0" y2="1"><stop offset=".4" stopColor="#fff" /><stop offset="1" stopColor="#d6d6d6" /></linearGradient>
      <linearGradient id="dark" x2="0" y2="1"><stop offset=".3" stopColor="#c0c0c0" /><stop offset="1" stopColor="#6a6a6a" /></linearGradient>
      <linearGradient id="green" x2="0" y2="1"><stop offset=".3" stopColor="#80e880" /><stop offset=".95" stopColor="#00b000" /></linearGradient>
    </defs>

    {/* Inputs and joystick */}
    <Box x={2204} y={250} w={48} h={29} label="Transfer Fcn"><Fraction x={2228} y={265} den="s+1" w={12} /></Box>
    <OpenPort x={2200} y={265} />
    <OpenPort x={2252} y={265} />
    <Box x={2304} y={293} w={32} h={48} fill="url(#gray)" label="pitch"><text className="right" x="2333" y="320">Out1</text></Box>
    <Wire d="2336,317 2360,317" />
    <Gain x={2360} y={317} w={43} h={22} text="0.3" label="Gain3" />
    <OpenPort x={2404} y={317} />
    <Box x={2312} y={353} w={24} h={23} label="e_c_dot">
      <path d="M2315 373h2v-14h4v14h4v-14h4v14h4" fill="none" stroke="#222" />
    </Box>
    <Wire d="2336,365 2360,365" />
    <Gain x={2360} y={365} w={51} h={30} text="pi/180" label="Gain5" />
    <OpenPort x={2412} y={365} />
    <Box x={2240} y={393} w={40} h={79} fill="url(#dark)" label="Joystick">
      <text x="2274" y="416">X</text>
      <text x="2274" y="456">Y</text>
    </Box>
    <Wire d="2280,413 2434,413 2434,353 2500,353" />
    <Wire d="2280,453 2422,453 2422,369 2456,369" />
    <Wire d="2544,353 2641,353 2641,301 2660,301" />
    <Wire d="2560,353 2560,529 2676,529" />
    <Wire d="2560,525 2564,525 2564,625" />
    <Wire d="2500,369 2660,369" />
    <Wire d="2587,369 2587,545 2676,545" />
    <Wire d="2587,543 2520,543 2520,641" />
    <Wire d="2509,617 2509,385 2660,385" />
    <Wire d="2622,585 2622,317 2660,317" />
    <Gain x={2500} y={353} w={44} h={24} text="1" label="Gain8" />
    <Gain x={2456} y={369} w={44} h={24} text="1" label="Gain7" />
    <Dot x={2560} y={353} /><Dot x={2587} y={369} /><Dot x={2560} y={525} /><Dot x={2587} y={543} />
    <Bar x={2660} y={293} h={31} />
    <Bar x={2660} y={361} h={31} />
    <Wire bold d="2664,309 2696,309" />
    <Wire bold d="2664,377 2696,377" />
    <Box x={2696} y={297} w={48} text="pitch.mat" label="To File1" />
    <Box x={2696} y={365} w={48} text="vation_rate.m" label="To File" />
    <HilBoard />
    <text x="2809" y="402">HIL Initialize</text>
    <text x="2809" y="414" fill="#888">HIL-1 (q8_usb-0)</text>

    {/* State feedback */}
    <Wire bold d="2612,889 2612,729 2282,729 2282,617 2304,617" />
    <Bar x={2304} y={579} h={76} />
    <Wire d="2308,585 2676,585" />
    <Wire d="2308,601 2676,601" />
    <Wire d="2308,633 2376,633 2376,617 2676,617" />
    <OpenPort x={2308} y={617} />
    <OpenPort x={2308} y={649} />
    <Wire d="2546,585 2546,633 2556,633" />
    <Wire d="2488,617 2488,649 2512,649" />
    <Dot x={2546} y={585} /><Dot x={2622} y={585} /><Dot x={2488} y={617} /><Dot x={2509} y={617} />
    <Sum x={2564} y={633} signs={[['+', 'l'], ['-', 't']]} />
    <Sum x={2520} y={649} signs={[['+', 'l'], ['-', 't']]} />
    <Wire d="2572,633 2632,633" />
    <Wire d="2528,649 2584,649" />
    <Wire d="2656,633 2676,633" />
    <Wire d="2608,649 2676,649" />
    <Box x={2632} y={621} w={24} label="Integrator"><Fraction x={2644} y={633} den="s" /></Box>
    <Box x={2584} y={637} w={24} label="Integrator1"><Fraction x={2596} y={649} den="s" /></Box>
    <Bar x={2676} y={521} h={31} />
    <Bar x={2676} y={577} h={80} />
    <Wire bold d="2680,537 2696,537" />
    <Wire bold d="2680,617 2696,617" />
    <Gain x={2696} y={537} w={44} h={24} text="F* u" label="Gain2" />
    <Gain x={2696} y={617} w={44} h={24} text="K* u" label="Gain1" />
    <Wire bold d="2740,537 2748,537" />
    <Wire bold d="2740,617 2756,617 2756,545" />
    <Sum x={2756} y={537} signs={[['+', 'l'], ['-', 'b']]} />
    <Wire bold d="2764,537 2808,537" />
    <Bar x={2808} y={520} h={34} />
    <Wire d="2812,529 2834,529 2834,585 2848,585" />
    <Wire d="2812,545 2839,545 2839,517 2896,517" />
    <Bridge x={2612} y={780} />
    <Wire bold d="2785,537 2785,780 2293,780 2293,889 2304,889" />
    <Dot big x={2785} y={537} />

    {/* Observer */}
    <Wire bold d="2376,889 2400,889" />
    <Gain x={2304} y={889} w={72} h={26} text="B_2* u" label="Gain" />
    <Wire bold d="2416,889 2468,889" />
    <Box x={2468} y={877} w={24} label="Integrator2"><Fraction x={2480} y={889} den="s" /></Box>
    <Wire bold d="2492,889 2656,889" />
    <Box x={2656} y={877} w={48} text="stimators.ma" label="To File2" />
    <Wire bold d="2556,889 2556,853 2512,853" />
    <Wire bold d="2440,853 2408,853 2408,881" />
    <Gain flip above x={2440} y={853} w={72} h={26} text="A_2* u" label="Gain6" />
    <Wire bold d="2556,889 2556,937" />
    <Wire bold d="2548,945 2517,945" />
    <Wire bold d="2445,945 2408,945 2408,897" />
    <Gain flip above x={2445} y={945} w={72} h={26} text="L * C* u" label="Gain4" />
    <Dot big x={2556} y={889} /><Dot big x={2612} y={889} />
    <Sum x={2408} y={889} signs={[['+', 'l'], ['+', 't'], ['+', 'b']]} />
    <Sum x={2556} y={945} signs={[['-', 't'], ['+', 'r']]} />
    <Wire bold d="3664,1013 3774,1013 3774,1102 2585,1102 2585,945 2564,945" />

    {/* Helicopter */}
    <Wire d="2956,649 2856,649 2856,593" />
    <Sum x={2856} y={585} signs={[['+', 'l'], ['+', 'b']]} />
    <Wire d="2864,585 2896,585" />
    <Box x={2896} y={481} w={56} h={139} fill="url(#green)" label="Conversion">
      <text className="left" x="2898" y="520">Vd [V]</text>
      <text className="left" x="2898" y="588">Vs [V]</text>
      <text className="right" x="2949" y="520">Vf [V]</text>
      <text className="right" x="2949" y="588">Vb [V]</text>
    </Box>
    <Wire d="2952,517 2984,517" />
    <Wire d="2952,585 2984,585" />
    <Box x={2984} y={479} w={176} h={139} fill="url(#green)" label="Heli 3D">
      <text className="left" x="2986" y="521">Vf [V]</text>
      <text className="left" x="2986" y="589">Vb [V]</text>
      {['Travel [rad]', 'Travel rate [rad/s]', 'Pitch [rad]', 'Pitch rate [rad/s]', 'Elevation [rad]', 'Elevation rate [rad/s]'].map((t, i) => (
        <text key={t} className="right" x="3157" y={493 + i * 24}>{t}</text>
      ))}
    </Box>
    <Box above x={2956} y={637} w={24} text="V_0" label="Constant" />
    {[489, 513, 537, 561, 609].map((y) => <Wire key={y} d={`3160,${y} 3324,${y}`} />)}
    <Wire d="3160,585 3188,585" />
    <Wire d="3204,585 3324,585" />
    <Wire d="3184,713 3196,713 3196,593" />
    <Sum x={3196} y={585} signs={[['+', 'l'], ['-', 'b']]} />
    <Box x={3160} y={701} w={24} text="0.4" label="Constant1" />
    <Bar x={3324} y={479} h={139} />
    <Wire bold d="3328,549 3420,549" />
    <Wire bold d="3384,549 3384,489 3420,489" />
    <Dot big x={3384} y={549} />
    <Box x={3420} y={476} w={24} h={25} label="Scope3">
      <rect x="3424" y="480" width="17" height="10" fill="none" stroke="#222" />
    </Box>
    <Box x={3420} y={537} w={48} text="Encoder.mat" label="To File3" />
    <Wire d="3231,489 3231,978 3085,978 3085,1001 3100,1001" />
    <Wire d="3275,537 3275,793 3408,793" />
    <Wire d="3255,585 3255,809 3408,809" />
    <Wire d="3231,825 3408,825" />
    <Dot x={3231} y={489} /><Dot x={3275} y={537} /><Dot x={3255} y={585} /><Dot x={3231} y={825} />
    <Bar x={3408} y={783} h={52} />
    <Wire bold d="3412,809 3496,809" />

    {/* IMU */}
    <Box x={2892} y={833} w={96} h={167} fill="url(#gray)" label="IMU">
      {['accelerometer, m/s^2', 'gyroscope, rad/s', 'magnetometer, uT', 'temperature, deg C', 'New data, 0/1'].map((t, i) => (
        <text key={t} className="right" x="2985" y={856 + i * 32}>{t}</text>
      ))}
    </Box>
    {[917, 949, 981].map((y) => <OpenPort key={y} x={2989} y={y} />)}
    <Wire bold d="2988,853 3019,853 3019,1025 3100,1025" />
    <Bridge x={3019} y={885} />
    <Wire bold d="2988,885 3120,885" />
    <Wire bold d="3075,885 3075,757 3496,757" />
    <Wire bold d="3019,945 3120,945" />
    <Dot big x={3075} y={885} /><Dot big x={3019} y={945} />
    <Box x={3120} y={873} w={48} text="Gyro.mat" label="To File5" />
    <Box x={3120} y={933} w={48} text="ulerAngles.ma" label="To File4" />
    <Box x={3100} y={988} w={32} h={49} fill="url(#gray)" label="accel->angles">
      <text className="left" x="3102" y="1004">In1</text>
      <text className="left" x="3102" y="1028">In2</text>
      <text className="right" x="3129" y="1016">Out1</text>
    </Box>
    <Wire bold d="3132,1013 3560,1013" />

    {/* Euler rates */}
    <Box bold x={3496} y={729} w={164} h={107} label="Gyro vector to [pitch rate, elevation rate, travle rate]">
      <text className="left" x="3498" y="760">gyro_vec</text>
      <text className="left" x="3498" y="812">euler_angles</text>
      <text className="right" x="3657" y="788">euler_rates</text>
      <text x="3578" y="798">gyro_vec_to_euler_rates</text>
      <g transform="translate(3572 776)"><Membrane size={13} /></g>
    </Box>
    <Lead d="3660,785 3735,785" />
    <Wire bold d="3733,785 3760,785" />
    <Wire bold d="3733,785 3733,855 3472,855 3472,957 3560,957" />
    <Dot big x={3733} y={785} />
    <Box x={3760} y={773} w={48} text="ulerRates.ma" label="To File6" />
    <Bar x={3560} y={931} h={51} />
    <Bar x={3560} y={985} h={55} />
    <Wire d="3564,941 3593,941 3593,997 3660,997" />
    <Wire d="3564,957 3582,957 3582,1029 3660,1029" />
    <Wire d="3564,973 3570,973 3570,1045 3660,1045" />
    <Wire d="3564,997 3576,997 3576,981 3660,981" />
    <Wire d="3564,1013 3660,1013" />
    <OpenPort x={3564} y={1029} />
    <Bar x={3660} y={972} h={81} />
  </Diagram>
);

const ModelWindow = () => (
  <Window>
    <TitleBar $dim>
      <ModelIcon />
      <WindowTitle>heli_q8 * - Simulink academic use</WindowTitle>
      <Caption />
    </TitleBar>
    <MenuBar $compact>
      {['File', 'Edit', 'View', 'Display', 'Diagram', 'Simulation', 'Analysis', 'Code', 'Tools', 'QUARC', 'Help'].map((m) => (
        <MenuItem key={m}>{m}</MenuItem>
      ))}
    </MenuBar>
    <ModelTools>
      <ModelGroup><Tool names={['New model', 'New options', 'Save']} /></ModelGroup>
      <ModelGroup><Tool names={['Back', 'Forward', 'Up']} /></ModelGroup>
      <ModelGroup><Tool names={['Library browser', 'Model configuration', 'Configuration options', 'Model explorer', 'Explorer options']} /></ModelGroup>
      <ModelGroup><Tool names={['Connect', 'Run', 'Stop']} /></ModelGroup>
      <ModelGroup>
        <Tool names={['Data inspector', 'Inspector options']} />
        <StopTime aria-label="Stop time" defaultValue="inf" />
        <SelectWrap>
          <SimMode aria-label="Simulation mode" defaultValue="External">
            <option>External</option>
          </SimMode>
          <Caret color="#888" />
        </SelectWrap>
      </ModelGroup>
      <ModelGroup><Tool names={['Model advisor', 'Advisor options']} /></ModelGroup>
      <ModelGroup><Tool names={['Build model', 'Build options']} /></ModelGroup>
    </ModelTools>
    <TabStrip>
      <Tab>heli_q8</Tab>
    </TabStrip>
    <Workspace>
      <Palette>
        <PaletteGroup>
          <PaletteButton aria-label="Hide or show browser">
            <svg width="12" height="12" fill="none" stroke="#555"><circle cx="6" cy="6" r="5" /><path d="M9 6H3M6 3L3 6l3 3" strokeWidth="1.500" /></svg>
          </PaletteButton>
          <PaletteRule />
          {paletteTop.map(([n, icon]) => <PaletteButton key={n} aria-label={n}>{icon}</PaletteButton>)}
        </PaletteGroup>
        <PaletteGroup>
          {paletteBottom.map(([n, icon]) => <PaletteButton key={n} aria-label={n}>{icon}</PaletteButton>)}
        </PaletteGroup>
      </Palette>
      <Editor>
        <Breadcrumb>
          <CrumbLink href="#heli_q8"><CrumbIcon><ModelIcon /></CrumbIcon>heli_q8</CrumbLink>
          <svg width="6" height="10"><path d="M0 0l6 5-6 5z" /></svg>
          <CrumbMenu><Caret color="#000" /></CrumbMenu>
        </Breadcrumb>
        <CanvasRow>
          <ModelDiagram />
          <ScrollTrack>
            <ScrollArrow><svg width="8" height="5" fill="none" stroke="#555" strokeWidth="1.500"><path d="M0 5l4-4 4 4" /></svg></ScrollArrow>
            <ScrollThumb />
            <ScrollRest />
            <ScrollArrow><svg width="8" height="5" fill="none" stroke="#555" strokeWidth="1.500"><path d="M0 0l4 4 4-4" /></svg></ScrollArrow>
          </ScrollTrack>
        </CanvasRow>
      </Editor>
    </Workspace>
    <StatusBar>
      <span>Ready</span>
      <StatusCenter><StatusLink href="#diagnostics">View diagnostics</StatusLink><span>80%</span></StatusCenter>
      <StatusLink href="#solver">ode1</StatusLink>
    </StatusBar>
  </Window>
);

/* ------------------------------------------------------------------ */
/* Taskbar                                                             */
/* ------------------------------------------------------------------ */

const TaskbarRoot = styled.footer`
  display: flex;
  align-items: stretch;
  height: 40px;
  background: #060b13;
  color: #fff;
`;

const TaskButton = styled.button<{ $state?: 'open' | 'active' }>`
  width: 49px;
  padding: 0;
  border: 0;
  border-bottom: 2px solid ${(p) => (p.$state ? '#76b9ed' : 'transparent')};
  background: ${(p) => (p.$state === 'active' ? '#3a3f46' : 'none')};
  display: grid;
  place-items: center;
`;

const Tray = styled.div<{ $full?: boolean }>`
  display: flex;
  align-items: center;
  margin-left: auto;
  padding-right: ${(p) => (p.$full ? 12 : 0)}px;
`;

const TrayButton = styled.button<{ $wide?: boolean }>`
  position: relative;
  width: ${(p) => (p.$wide ? 40 : 25)}px;
  height: 40px;
  padding: 0;
  border: 0;
  background: none;
  display: grid;
  place-items: center;
`;

const Clock = styled.time`
  width: 68px;
  text-align: center;
  line-height: 18px;
`;

const Badge = styled.span`
  position: absolute;
  right: 4px;
  bottom: 4px;
  width: 15px;
  height: 15px;
  border: 1px solid #aaa;
  border-radius: 50%;
  background: #333;
  font-size: 9px;
  line-height: 13px;
`;

const Taskbar = ({ tray }: { tray?: boolean }) => (
  <TaskbarRoot>
    <TaskButton aria-label="Start">
      <svg width="16" height="16" fill="#fff"><path d="M0 2.300L6.500 1.400V7.500H0zM7.500 1.200L16 0V7.500H7.500zM0 8.500H6.500V14.600L0 13.700zM7.500 8.500H16V16L7.500 14.800z" /></svg>
    </TaskButton>
    <TaskButton aria-label="Search">
      <svg width="16" height="16" fill="none" stroke="#fff" strokeWidth="1.500"><circle cx="10" cy="6" r="5" /><path d="M6.500 9.500L1 15" /></svg>
    </TaskButton>
    <TaskButton aria-label="Task view">
      <svg width="18" height="16" fill="none" stroke="#fff"><path d="M1.500 0v3.500h10V0M1.500 16v-3.500h10V16M1.500 5.500h10v5h-10zM15.500 0v16M14 4.500h3" /></svg>
    </TaskButton>
    <TaskButton aria-label="Edge">
      <svg width="22" height="22" viewBox="0 0 22 22" fill="#0a84e0"><path d="M1 10C2 4 6 1 11 1c6 0 10 4 10 9v3H8c0 4 4 5 7 5 2 0 4-.5 5-1.500v4C18 21.500 16 22 13 22 7 22 3 18 4 12c.5-2.500 2-4.500 4-5.500-3 .5-5 1.500-7 3.500zM8 9h7c0-3-1.500-4-3.500-4S8.500 6.500 8 9z" /></svg>
    </TaskButton>
    <TaskButton aria-label="MATLAB" $state="active"><Membrane size={23} /></TaskButton>
    <TaskButton aria-label="File Explorer" $state="open">
      <svg width="20" height="18" viewBox="0 0 20 18"><path d="M0 1h7l2 2h11v14H0z" fill="#f2c94c" /><path d="M0 5h20v12H0z" fill="#ffe694" /><path d="M4 10h12v7h-3v-3H7v3H4z" fill="#3fa9e8" /></svg>
    </TaskButton>
    <Tray $full={tray}>
      {tray && (
        <>
          <TrayButton $wide aria-label="People">
            <svg width="16" height="16" fill="none" stroke="#fff"><circle cx="6" cy="6" r="2.500" /><circle cx="12" cy="3.500" r="2" /><path d="M1 15c0-8 9-8 10-2M11 7c3-1 5 1 5 4" /></svg>
          </TrayButton>
          <TrayButton aria-label="Show hidden icons">
            <svg width="10" height="6" fill="none" stroke="#fff" strokeWidth="1.500"><path d="M0 6l5-5 5 5" /></svg>
          </TrayButton>
          <TrayButton aria-label="Network">
            <svg width="16" height="16" fill="none" stroke="#fff"><path d="M4 2.500h11v8H4zM1 5v5M1 1h3v3H1zM7 13h5" /><path d="M11 8l5 8H7z" fill="#ffc400" stroke="none" /></svg>
          </TrayButton>
          <TrayButton aria-label="Volume">
            <svg width="16" height="14" fill="none" stroke="#fff"><path d="M1 5h2l4-4v12L3 9H1zM9 5q2 2 0 4M11 3q4 4 0 8M13 1q5 6 0 12" /></svg>
          </TrayButton>
          <TrayButton $wide aria-label="Input language">NOB</TrayButton>
        </>
      )}
      <Clock>13:21<br />24.10.2020</Clock>
      {tray && (
        <TrayButton $wide aria-label="Notifications">
          <svg width="16" height="16"><path d="M0 0h16v12H7l-3 4v-4H0z" fill="#fff" /><path d="M3 3.500h10M3 6h10M3 8.500h7" stroke="#060b13" /></svg>
          <Badge>1</Badge>
        </TrayButton>
      )}
    </Tray>
  </TaskbarRoot>
);

export default function App() {
  return (
    <>
      <GlobalStyle />
      <Desktop>
        <Screen>
          <FigureWindow />
          <Taskbar tray />
        </Screen>
        <Screen>
          <ModelWindow />
          <Taskbar />
        </Screen>
      </Desktop>
    </>
  );
}
